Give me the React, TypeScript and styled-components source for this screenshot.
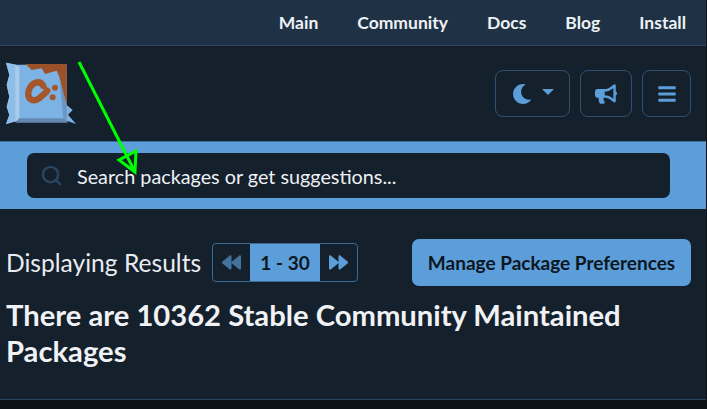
import React from "react";
import styled, { createGlobalStyle } from "styled-components";
import { FaMoon, FaBullhorn, FaBars, FaBackward, FaForward } from "react-icons/fa";
import { Search as SearchGlyph } from "lucide-react";

const Global = createGlobalStyle`
  *, *::before, *::after { box-sizing: border-box; }
  html, body { margin: 0; padding: 0; background: #0b1218; }
  body { font-family: Lato, "Liberation Sans", sans-serif; color: #f0f2f5; width: 707px; height: 409px; overflow: hidden; }
`;
const Page = styled.div`
  position: relative; width: 706px; height: 409px; display: flex; flex-direction: column;
`;
const TopNav = styled.nav`
  height: 46px; background: #1f3145; border-bottom: 1px solid #2b4561;
  display: flex; justify-content: flex-end; align-items: center; gap: 39px; padding-right: 20px;
`;
const NavLink = styled.a`
  font-weight: 700; font-size: 17.5px; color: #eef1f5;
`;
const Header = styled.header`
  height: 95px; background: #14202c; display: flex; align-items: flex-start; justify-content: space-between;
  padding: 14px 15px 0 0;
`;
const HeaderBtns = styled.div`
  display: flex; gap: 10px; margin-top: 10px;
`;
const IconBtn = styled.button<{ $w: number; $icon?: number }>`
  width: ${p => p.$w}px; height: 47px; border: 1px solid #2f5274; border-radius: 8px; background: transparent;
  color: #5b9ed9; display: flex; align-items: center; justify-content: center; gap: 10px; padding: 0; font-size: ${p => p.$icon ?? 20}px;
`;
const Caret = styled.span`
  width: 0; height: 0; border-left: 6px solid transparent; border-right: 6px solid transparent; border-top: 6px solid #5b9ed9; margin-top: -3px;
`;
const Band = styled.div`
  height: 68px; background: #5c9ed9; border-top: 1px solid #3f6f9b; padding: 11px 36px 0 27px; display: flex; align-items: flex-start;
`;
const Search = styled.div`
  flex: 1; height: 45px; background: #14202c; border-radius: 7px; display: flex; align-items: center; padding-left: 13px; gap: 14px;
  color: #294661;
`;
const SearchText = styled.span`
  color: #eef1f5; font-size: 19.8px;
`;
const Main = styled.main`
  height: 191px; background: #14202c; padding: 30px 15px 0 6px; border-bottom: 1px solid #2b4561; display: flex; flex-direction: column;
`;
const ControlRow = styled.div`
  display: flex; align-items: center; height: 47px;
`;
const Label = styled.span`
  font-size: 24.6px; color: #e8ecf1; width: 206px; flex: none;
`;
const Pager = styled.div`
  display: flex; height: 39px; width: 146px; border: 1px solid #3d6a94; border-radius: 4px; overflow: hidden;
`;
const PagerArrow = styled.div<{ $bright?: boolean }>`
  width: 37px; flex: none; display: flex; align-items: center; justify-content: center; font-size: 19px;
  color: ${p => (p.$bright ? "#5c9ed9" : "#44729b")};
`;
const PagerCurrent = styled.div`
  flex: 1; background: #5c9ed9; color: #0c1620; font-weight: 700; font-size: 19px; display: flex; align-items: center; justify-content: center;
`;
const Manage = styled.button`
  margin-left: auto; width: 279px; height: 47px; background: #5c9ed9; border: 0; border-radius: 7px; color: #0c1620;
  font-family: inherit; font-weight: 700; font-size: 19px; padding: 0;
`;
const Title = styled.h1`
  margin: 11px 0 0; font-size: 29.2px; line-height: 36px; font-weight: 700; color: #f0f2f5; width: 660px;
`;
const Overlay = styled.svg`
  position: absolute; left: 0; top: 0; pointer-events: none;
`;
const LogoWrap = styled.div`
  width: 80px; height: 64px;
`;

const Logo = () => (
  <svg width="80" height="64" viewBox="0 30 240 192">
    <path d="M18 38 L48 44 L200 44 L200 165 L218 180 L204 194 L228 222 L205 214 L48 214 L18 222 L28 195 L20 170 L28 140 L20 105 L28 75 Z" fill="#7db2e4" />
    <path d="M18 38 L48 44 L58 52 L58 205 L48 214 L18 222 L28 195 L20 170 L28 140 L20 105 L28 75 Z" fill="#8fbde9" />
    <path d="M46 44 L58 52 L58 205 L46 216 Z" fill="#a8cbec" />
    <path d="M76 42 L200 42 L200 165 L190 130 L178 80 L170 62 L135 72 L125 55 L95 60 Z" fill="#9c5228" />
    <path d="M178 80 L190 130 L200 165 L200 216 L190 205 Z" fill="#6d94c3" />
    <path d="M58 205 L190 205 L205 218 L46 218 Z" fill="#6488b2" />
    <path d="M130 108 C120 90 96 94 86 122 C80 146 98 158 116 146 C126 138 136 130 142 122" stroke="#a5562a" strokeWidth="19" strokeLinecap="round" fill="none" />
    <circle cx="165" cy="113" r="9" fill="#a5562a" />
    <circle cx="158" cy="142" r="9" fill="#a5562a" />
  </svg>
);

export default function App() {
  return (
    <Page>
      <Global />
      <TopNav>
        <NavLink>Main</NavLink>
        <NavLink>Community</NavLink>
        <NavLink>Docs</NavLink>
        <NavLink>Blog</NavLink>
        <NavLink>Install</NavLink>
      </TopNav>
      <Header>
        <LogoWrap><Logo /></LogoWrap>
        <HeaderBtns>
          <IconBtn $w={75}><FaMoon /><Caret /></IconBtn>
          <IconBtn $w={52} $icon={22}><FaBullhorn /></IconBtn>
          <IconBtn $w={49}><FaBars /></IconBtn>
        </HeaderBtns>
      </Header>
      <Band>
        <Search>
          <SearchGlyph size={23} strokeWidth={2.6} />
          <SearchText>Search packages or get suggestions...</SearchText>
        </Search>
      </Band>
      <Main>
        <ControlRow>
          <Label>Displaying Results</Label>
          <Pager>
            <PagerArrow><FaBackward /></PagerArrow>
            <PagerCurrent>1 - 30</PagerCurrent>
            <PagerArrow $bright><FaForward /></PagerArrow>
          </Pager>
          <Manage>Manage Package Preferences</Manage>
        </ControlRow>
        <Title>There are 10362 Stable Community Maintained Packages</Title>
      </Main>
      <Overlay width="707" height="409" viewBox="0 0 707 409">
        <path d="M79 62 L134 170" stroke="#00ff00" strokeWidth="3" fill="none" />
        <path d="M136 151 L119 160 L135 172 Z" stroke="#00ff00" strokeWidth="3" fill="none" />
      </Overlay>
    </Page>
  );
}
